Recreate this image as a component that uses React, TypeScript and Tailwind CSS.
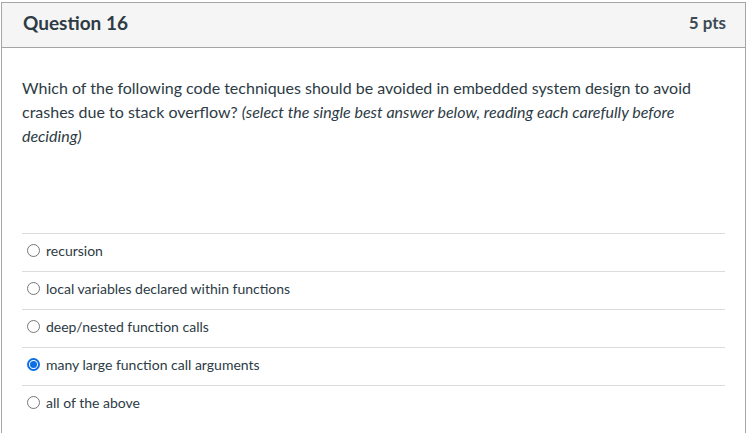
const answers = [
  { label: "recursion", checked: false },
  { label: "local variables declared within functions", checked: false },
  { label: "deep/nested function calls", checked: false },
  { label: "many large function call arguments", checked: true },
  { label: "all of the above", checked: false },
];

function Radio({ checked }: { checked: boolean }) {
  if (checked) {
    return (
      <span className="w-[13px] h-[13px] rounded-full border-2 border-[#0b6ee6] flex items-center justify-center shrink-0">
        <span className="w-[7px] h-[7px] rounded-full bg-[#0b6ee6]" />
      </span>
    );
  }
  return <span className="w-[13px] h-[13px] rounded-full border border-[#767676] bg-white shrink-0" />;
}

export default function App() {
  return (
    <div className="min-h-screen bg-white pt-[2px] pl-[1px] pr-[1px] font-['Lato','Noto_Sans',sans-serif] text-[#2d3b45]">
      <div className="border border-b-0 border-[#a5a5a5] min-h-[440px]">
        {/* HEADER */}
        <div className="h-[45px] bg-[#f5f5f5] border-b border-[#a5a5a5] flex items-center justify-between pl-[21px] pr-[19px] pb-[4px]">
          <h2 className="text-[19px] font-bold">Question 16</h2>
          <span className="text-[17px] font-bold text-[#3d4a54]">5 pts</span>
        </div>

        <div className="px-[20px]">
          <p className="pt-[28px] text-[16px] leading-[24px] pr-[30px]">
            Which of the following code techniques should be avoided in embedded system design to avoid
            crashes due to stack overflow?{" "}
            <em>(select the single best answer below, reading each carefully before deciding)</em>
          </p>

          <div className="mt-[85px]">
            {answers.map((a) => (
              <label
                key={a.label}
                className="h-[38px] border-t border-[#dcdcdc] flex items-center gap-[6px] pl-[5px] pb-[5px] text-[14px]"
              >
                <Radio checked={a.checked} />
                <span>{a.label}</span>
              </label>
            ))}
          </div>
        </div>
      </div>
    </div>
  );
}
